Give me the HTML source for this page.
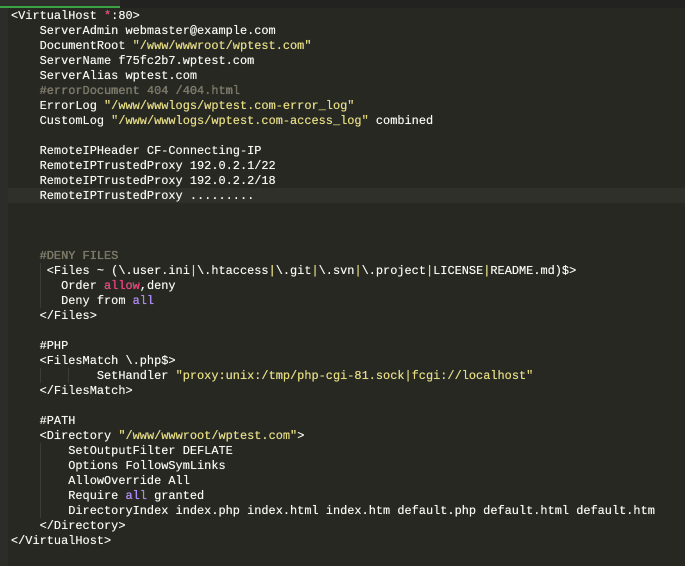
<!DOCTYPE html>
<html><head><meta charset="utf-8"><style>
body{margin:0;width:685px;height:566px;background:#272822;overflow:hidden;position:relative;font-family:"Liberation Mono",monospace;font-size:11.93px;color:#f8f8f2}
#top{position:absolute;left:0;top:0;width:685px;height:8px;background:#222220}
#tab{position:absolute;left:0;top:0;width:120px;height:6px;background:#2e2e2b;border-bottom:2px solid #3ba345}
#gut{position:absolute;left:0;top:8px;width:8px;height:558px;background:#2c2c28}
#cur{position:absolute;left:8px;top:188px;width:677px;height:15px;background:#2f302a}
pre{position:absolute;left:11px;top:9px;margin:0;font:inherit;line-height:15px;white-space:pre;text-shadow:0 0 0.4px #f8f8f2}
.s{color:#e6db74}.c{color:#75715e}.r{color:#f92672}.p{color:#ae81ff}
.g{position:absolute;width:1px;background:#3b3c35}
</style></head><body>
<div id="top"></div><div id="tab"></div><div id="gut"></div><div id="cur"></div>
<div class="g" style="left:40px;top:263px;height:45px"></div>
<div class="g" style="left:40px;top:368px;height:15px"></div>
<div class="g" style="left:68px;top:368px;height:15px"></div>
<div class="g" style="left:40px;top:443px;height:75px"></div>
<pre>&lt;VirtualHost <span class="r">*</span>:80&gt;
    ServerAdmin webmaster@example.com
    DocumentRoot <span class="s">"/www/wwwroot/wptest.com"</span>
    ServerName f75fc2b7.wptest.com
    ServerAlias wptest.com
    <span class="c">#errorDocument 404 /404.html</span>
    ErrorLog <span class="s">"/www/wwwlogs/wptest.com-error_log"</span>
    CustomLog <span class="s">"/www/wwwlogs/wptest.com-access_log"</span> combined

    RemoteIPHeader CF-Connecting-IP
    RemoteIPTrustedProxy 192.0.2.1/22
    RemoteIPTrustedProxy 192.0.2.2/18
    RemoteIPTrustedProxy .........



    <span class="c">#DENY FILES</span>
     &lt;Files ~ (\.user.ini<span class="s">|</span>\.htaccess<span class="s">|</span>\.git<span class="s">|</span>\.svn<span class="s">|</span>\.project<span class="s">|</span>LICENSE<span class="s">|</span>README.md)$&gt;
       Order <span class="r">allow</span>,deny
       Deny from <span class="p">all</span>
    &lt;/Files&gt;

    #PHP
    &lt;FilesMatch \.php$&gt;
            SetHandler <span class="s">"proxy:unix:/tmp/php-cgi-81.sock|fcgi://localhost"</span>
    &lt;/FilesMatch&gt;

    #PATH
    &lt;Directory <span class="s">"/www/wwwroot/wptest.com"</span>&gt;
        SetOutputFilter DEFLATE
        Options FollowSymLinks
        AllowOverride All
        Require <span class="p">all</span> granted
        DirectoryIndex index.php index.html index.htm default.php default.html default.htm
    &lt;/Directory&gt;
&lt;/VirtualHost&gt;</pre>
</body></html>
